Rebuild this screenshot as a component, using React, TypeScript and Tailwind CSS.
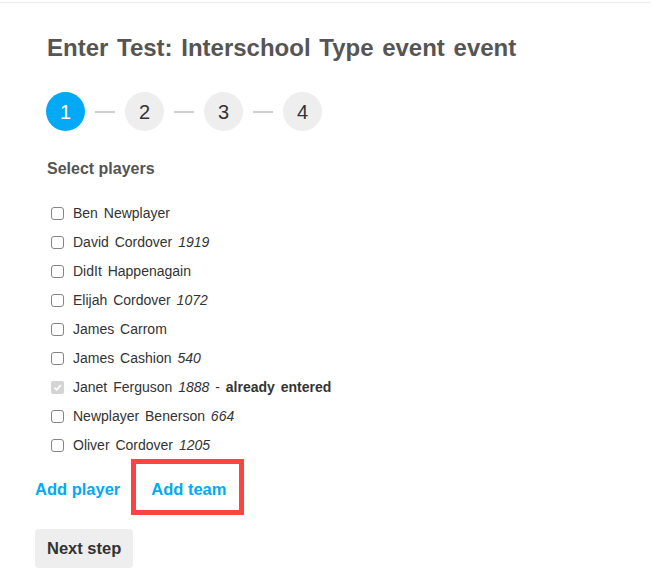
import React from "react";

type Player = { name: string; rating?: number; entered?: boolean };

const players: Player[] = [
  { name: "Ben Newplayer" },
  { name: "David Cordover", rating: 1919 },
  { name: "DidIt Happenagain" },
  { name: "Elijah Cordover", rating: 1072 },
  { name: "James Carrom" },
  { name: "James Cashion", rating: 540 },
  { name: "Janet Ferguson", rating: 1888, entered: true },
  { name: "Newplayer Benerson", rating: 664 },
  { name: "Oliver Cordover", rating: 1205 },
];

function Box({ checked }: { checked?: boolean }) {
  if (checked) {
    return (
      <span className="flex h-[13px] w-[13px] items-center justify-center rounded-[2px] bg-[#d4d4d4]">
        <svg width="9" height="9" viewBox="0 0 10 10" fill="none">
          <path d="M1.5 5.2 L4 7.6 L8.6 2.4" stroke="#fff" strokeWidth="1.8" />
        </svg>
      </span>
    );
  }
  return <span className="h-[13px] w-[13px] rounded-[3px] border border-[#858585] bg-white" />;
}

function Steps() {
  return (
    <div className="ml-[46px] mt-[30px] flex items-center">
      {[1, 2, 3, 4].map((n) => (
        <React.Fragment key={n}>
          {n > 1 && <span className="mx-[10px] h-[2px] w-[20px] bg-[#cfcfcf]" />}
          <span
            className={
              "flex h-[39px] w-[39px] items-center justify-center rounded-full text-[20px] " +
              (n === 1 ? "bg-[#03a9f4] text-white" : "bg-[#eeeeee] text-[#333]")
            }
          >
            {n}
          </span>
        </React.Fragment>
      ))}
    </div>
  );
}

export default function App() {
  return (
    <div className="h-[585px] w-[651px] bg-white font-['Liberation_Sans',Arial,sans-serif] text-[#333]">
      <div className="h-[3px] border-b border-[#ececec] pt-[2px]" />
      <h1 className="ml-[47px] mt-[31px] text-[24px] font-bold leading-[28px] text-[#555] [word-spacing:2px]">
        Enter Test: Interschool Type event event
      </h1>
      <Steps />
      <h2 className="ml-[47px] mt-[28px] text-[16px] font-bold leading-[20px] text-[#555]">Select players</h2>
      <div className="mt-[20px]">
        {players.map((p) => (
          <label key={p.name} className="ml-[51px] flex h-[29px] items-center gap-[9px] text-[14px] [word-spacing:2px]">
            <Box checked={p.entered} />
            <span>
              {p.name}
              {p.rating !== undefined && <i> {p.rating}</i>}
              {p.entered && (
                <>
                  {" - "}
                  <b>already entered</b>
                </>
              )}
            </span>
          </label>
        ))}
      </div>
      <div className="-mt-px flex items-start text-[16.5px] font-bold leading-[20px] text-[#03a9f4]">
        <a className="ml-[35px] mt-[20px] cursor-pointer">Add player</a>
        <span className="ml-[11px] border-[5px] border-[#ff4343] pb-[11px] pl-[15px] pr-[13px] pt-[15px]">
          <a className="cursor-pointer">Add team</a>
        </span>
      </div>
      <button className="ml-[35px] mt-[14px] flex h-[39px] items-center rounded-[4px] bg-[#eeeeee] px-3 text-[16.5px] font-bold text-[#333]">
        Next step
      </button>
    </div>
  );
}
